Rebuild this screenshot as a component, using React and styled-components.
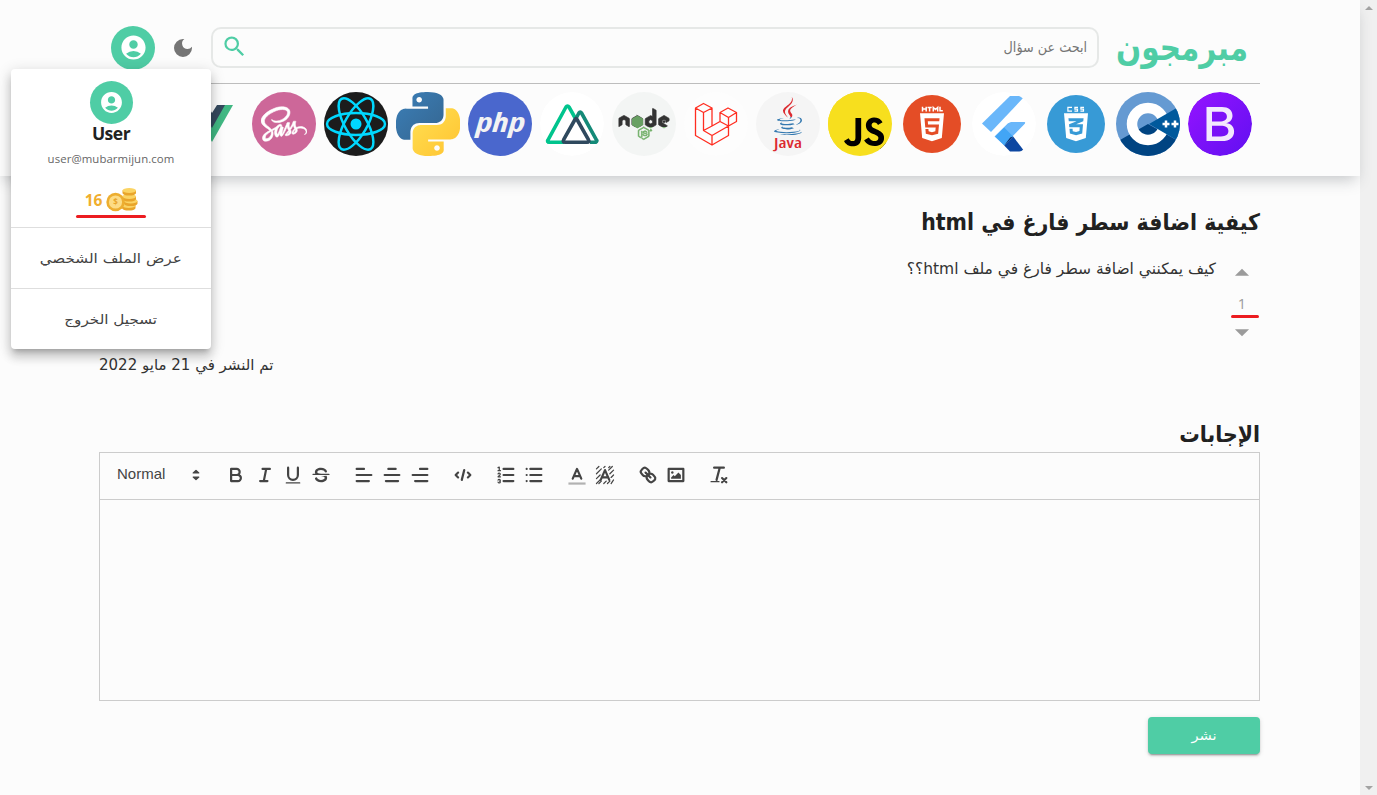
import React from "react";
import styled, { createGlobalStyle } from "styled-components";
import { MdAccountCircle, MdDarkMode, MdSearch, MdArrowDropUp, MdArrowDropDown } from "react-icons/md";
import { FaSass, FaNode, FaJava, FaHtml5, FaCss3Alt } from "react-icons/fa";
import { SiJavascript } from "react-icons/si";

const GREEN = "#4fcda5";

const Global = createGlobalStyle`
  * { box-sizing: border-box; }
  body { margin: 0; background: #fcfcfc; color: #212121; font-family: "DejaVu Sans Condensed", "DejaVu Sans", sans-serif; font-stretch: condensed; overflow: hidden; }
  button { font: inherit; border: 0; background: none; padding: 0; color: inherit; }
  svg { display: block; flex: none; }
`;

const Screen = styled.div`
  display: flex;
  width: 1377px;
  height: 795px;
`;
const Page = styled.div`
  position: relative;
  width: 1360px;
  height: 795px;
  direction: rtl;
`;
const Scrollbar = styled.aside`
  width: 17px;
  background: #f0f0f0;
  display: flex;
  flex-direction: column;
  justify-content: space-between;
  align-items: center;
  padding: 6px 0 5px;
`;
const Arrow = styled.i`
  border: 4px solid transparent;
  border-top-width: ${(p) => (p.$down ? 4 : 0)}px;
  border-bottom-width: ${(p) => (p.$down ? 0 : 4)}px;
  border-${(p) => (p.$down ? "top" : "bottom")}-color: #a3a3a3;
`;

const Header = styled.header`
  height: 176px;
  padding: 0 100px 0 99px;
  box-shadow: 0 8px 14px -4px rgba(50, 60, 65, 0.27);
`;
const TopBar = styled.div`
  height: 84px;
  border-bottom: 1px solid #bdbdbd;
  display: flex;
  align-items: center;
  padding: 12px 12px 0;
`;
const Brand = styled.h1`
  margin: 0;
  width: 132px;
  height: 40px;
  line-height: 40px;
  font-size: 36px;
  color: ${GREEN};
  white-space: nowrap;
  transform: scaleX(0.912);
  transform-origin: right;
`;
const Search = styled.div`
  width: 888px;
  height: 41px;
  margin-right: 17px;
  border: 2px solid #e6e8e7;
  border-radius: 10px;
  display: flex;
  align-items: center;
  justify-content: space-between;
  padding: 0 10px 2px 8px;
  color: #757575;
  font-size: 14.2px;
`;
const IconButton = styled.button`
  width: 24px;
  height: 24px;
  margin: 0 16px;
  padding-bottom: 2px;
  color: #757575;
`;
const Avatar = styled.span`
  width: ${(p) => p.$size}px;
  height: ${(p) => p.$size}px;
  flex: none;
  border-radius: 50%;
  background: ${GREEN};
  color: #fff;
  display: flex;
  align-items: center;
  justify-content: center;
`;
const TagList = styled.nav`
  display: flex;
  gap: 8px;
  padding: 8px 8px 0;
  overflow: hidden;
`;

const Menu = styled.div`
  position: absolute;
  left: 11px;
  top: 69px;
  width: 200px;
  height: 280px;
  background: #fff;
  border-radius: 4px;
  box-shadow: 0 5px 5px -3px rgba(0, 0, 0, 0.2), 0 8px 10px 1px rgba(0, 0, 0, 0.14), 0 3px 14px 2px rgba(0, 0, 0, 0.12);
`;
const Profile = styled.div`
  height: 158px;
  padding-top: 12px;
  display: flex;
  flex-direction: column;
  align-items: center;
`;
const UserName = styled.strong`
  font: 700 17.500px/20px "Open Sans", sans-serif;
  letter-spacing: -0.5px;
  margin-top: -1px;
`;
const Email = styled.span`
  font: 11.400px/16px "Open Sans", sans-serif;
  letter-spacing: 0.08px;
  color: #666;
  margin-top: 8px;
`;
const Points = styled.div`
  direction: ltr;
  display: flex;
  align-items: center;
  gap: 4px;
  height: 26px;
  margin-top: 20px;
  margin-bottom: 2px;
  padding-left: 1px;
  font: 700 15.500px "Open Sans", sans-serif;
  color: #f0ae2e;
`;
const RedLine = styled.span`
  width: ${(p) => p.$w}px;
  height: 3px;
  flex: none;
  border-radius: 2px;
  background: #ec1c20;
`;
const MenuItem = styled.button`
  display: block;
  width: 100%;
  height: 61px;
  border-top: 1px solid #dedede;
  font-family: "DejaVu Sans", sans-serif;
  font-stretch: normal;
  font-size: 13px;
  color: #424242;
`;
const Wide = styled.span`
  display: inline-block;
  transform: scaleX(${(p) => p.$x});
`;

const Main = styled.main`
  padding: 28px 100px 0 99px;
`;
const Heading = styled.h2`
  margin: ${(p) => p.$top || 0}px 0 0;
  height: 36px;
  line-height: 36px;
  font-size: 22.800px;
  white-space: nowrap;
`;
const Question = styled.section`
  display: flex;
  height: 100px;
  margin-top: 16px;
`;
const Votes = styled.div`
  width: 36px;
  display: flex;
  flex-direction: column;
  align-items: center;
  color: #9b9b9b;
  font: 400 14.500px/20px "Open Sans", sans-serif;
`;
const VoteValue = styled.span`
  margin-top: 4px;
  height: 21px;
`;
const VoteLine = styled(RedLine)`
  align-self: flex-start;
  margin: 0 1px -3px 0;
`;
const Body = styled.p`
  margin: 0 8px 0 0;
  font-family: "DejaVu Sans", sans-serif;
  font-stretch: normal;
  font-size: 15.500px;
  line-height: 26px;
  color: #333;
`;
const PostedAt = styled.p`
  margin: -6px 0 0;
  height: 30px;
  line-height: 30px;
  font-family: "DejaVu Sans", sans-serif;
  font-stretch: normal;
  font-size: 15px;
  color: #333;
  text-align: left;
`;
const Editor = styled.section`
  direction: ltr;
  border: 1px solid #ccc;
  height: 249px;
`;
const Toolbar = styled.div`
  height: 47px;
  border-bottom: 1px solid #ccc;
  display: flex;
  align-items: center;
  padding: 0 17px 2px;
`;
const Picker = styled.span`
  display: flex;
  justify-content: space-between;
  align-items: center;
  width: 90px;
  margin-right: -2.500px;
  color: #444;
  font: 15px/20px "Liberation Sans", Arial, sans-serif;
`;
const PickerLabel = styled.span`
  padding-bottom: 2px;
`;
const Group = styled.span`
  display: flex;
  gap: 6.200px;
  margin-left: 20.900px;
`;
const Tool = styled.svg.attrs({ viewBox: "0 0 18 18", width: 22, height: 22 })`
  fill: none;
  stroke: #444;
  stroke-width: 1.800;
  stroke-linecap: round;
  stroke-linejoin: round;
  .f { fill: #444; stroke: none; }
  .sf { fill: #444; stroke-width: 1; }
  .t { stroke-width: 1; }
`;
const Submit = styled.button`
  display: block;
  width: 112px;
  height: 37px;
  margin-top: 16px;
  border-radius: 4px;
  background: ${GREEN};
  color: #fff;
  font-size: 13px;
  box-shadow: 0 3px 1px -2px rgba(0, 0, 0, 0.2), 0 2px 2px rgba(0, 0, 0, 0.14), 0 1px 5px rgba(0, 0, 0, 0.12);
`;

const Logo = styled.svg.attrs({ viewBox: "0 0 64 64", width: 64, height: 64, direction: "ltr" })`
  border-radius: 50%;
`;
const SquareLogo = styled(Logo)`
  border-radius: 0;
`;

const Bootstrap = () => (
  <Logo>
    <defs>
      <linearGradient id="bs" x1="0" y1="0" x2="1" y2="1"><stop offset=".1" stopColor="#9013fe" /><stop offset=".9" stopColor="#6610f2" /></linearGradient>
    </defs>
    <circle cx="32" cy="32" r="32" fill="url(#bs)" />
    <path fill="#f3e9fd" fillRule="evenodd" d="M18.500 15H34c6.400 0 10.500 3.300 10.500 8.700 0 3.600-2.400 6.600-6 7.300v.2c4.600.5 7.600 3.600 7.600 8.200 0 6-4.500 9.600-12.100 9.600H18.500zm5.500 4.700v9.800h7.300c5 0 7.600-1.800 7.600-5 0-3.100-2.200-4.800-6-4.800zm0 14v10.700h9c4.900 0 7.400-1.900 7.400-5.300 0-3.600-2.700-5.400-7.900-5.400z" />
  </Logo>
);
const Cpp = () => (
  <Logo>
    <rect width="64" height="64" fill="#659ad2" />
    <path d="M4 48 32 32 64 50V64H0V50z" fill="#004482" />
    <circle cx="32" cy="32" r="16" fill="none" stroke="#fff" strokeWidth="10.500" />
    <path d="M33 32 64 14v36z" fill="#00599c" />
    <path d="M46.500 32h7M50 28.500v7M55.500 32h7M59 28.500v7" stroke="#fff" strokeWidth="2.500" />
  </Logo>
);
const Css = () => (
  <Logo>
    <circle cx="32" cy="32" r="29" fill="#379ad6" />
    <path d="M26.700 15.400h-4.100v3.700h4.100M32.700 15.400h-3.100v1.800h2.600v1.900h-3.100M38.700 15.400h-3.100v1.800h2.600v1.900h-3.100" transform="translate(1.300 0)" fill="none" stroke="#fff" strokeWidth="1.200" />
    <FaCss3Alt x="16" y="19.300" size={32} color="#fff" />
  </Logo>
);
const Flutter = () => (
  <Logo>
    <circle cx="32" cy="32" r="32" fill="#fff" />
    <path d="M38 4h12.500c1 0 1.500 1 .8 1.800L19 40l-9-8.500z" fill="#6ab7fa" />
    <path d="M39 30h13c1.300 0 1.500 1 .8 1.700L32 53l-9.500-8.500L36 31.200z" fill="#6ab7fa" />
    <path d="m32.200 35.500 9 9-9 9-9-9z" fill="#42a5f5" />
    <path d="m41.200 44.500 10 13.300c.5.700 0 1.700-1 1.700H38L32.200 53.500z" fill="#0d47a1" />
    <path d="m32.200 53.500 9-9-3 1z" fill="#082c65" />
  </Logo>
);
const Html = () => (
  <Logo>
    <circle cx="32" cy="32" r="29" fill="#e44d26" />
    <path d="M22.500 14.700v4.800m3.700-4.800v4.800m-3.700-2.400h3.700M27.500 15.500h4.200m-2.100 0v4M33.300 19.500v-4l2.200 2 2.200-2v4M40 14.700v4.100h2.800" fill="none" stroke="#fff" strokeWidth="1.500" />
    <FaHtml5 x="16" y="19.300" size={32} color="#fff" />
  </Logo>
);
const Js = () => (
  <Logo>
    <rect width="64" height="64" fill="#f7df1e" />
    <rect x="12" y="23" width="46" height="34" />
    <SiJavascript x="0" y="-2" size={61} color="#f7df1e" />
  </Logo>
);
const Java = () => (
  <Logo>
    <defs>
      <linearGradient id="jv" x1="0" y1="0" x2="0" y2="1"><stop offset=".53" stopColor="#dc2a30" /><stop offset=".53" stopColor="#3479b0" /></linearGradient>
    </defs>
    <rect width="64" height="64" fill="#f5f5f5" />
    <FaJava x="13" y="5" size={38} fill="url(#jv)" />
    <text x="18" y="56" fontFamily="Open Sans" fontWeight="600" fontSize="15" fill="#dc2a30" textLength="28" lengthAdjust="spacingAndGlyphs">Java</text>
  </Logo>
);
const Laravel = () => (
  <Logo>
    <circle cx="32" cy="32" r="32" fill="#fdfdfd" />
    <path
      fill="none" stroke="#ff2d20" strokeWidth="1.300" strokeLinejoin="round"
      d="M11.500 16 19.500 11.500 28 16 19.500 20.500zM11.500 16V43.500L28 53 44.500 43.500V34L28 43.500 19.500 38.500V20.500M28 16V34L19.500 38.500M28 43.500V53M28 34 36 29.500 44.500 34M36 20.500 44 16 52.500 20.500 44.500 25.500zM36 20.500V29.500M52.500 20.500V29.500L44.500 34V25.500"
    />
  </Logo>
);
const Node = () => (
  <Logo>
    <defs>
      <linearGradient id="nd" x1="0" y1="0" x2="0" y2="1"><stop offset=".59" stopColor="#333" /><stop offset=".59" stopColor="#6fae66" /></linearGradient>
    </defs>
    <rect width="64" height="64" fill="#f3f5f4" />
    <FaNode x="6.500" y="6.500" size={51} fill="url(#nd)" stroke="url(#nd)" strokeWidth="8" />
    <path d="m25.500 23.500 5.500 3.200v6.400l-5.500 3.200-5.500-3.200v-6.400z" fill="#68a063" />
  </Logo>
);
const Nuxt = () => (
  <Logo>
    <circle cx="32" cy="32" r="32" fill="#fff" />
    <g fill="none" strokeWidth="3.600" strokeLinejoin="round">
      <path d="M24 50.300H9c-1.500 0-1.800-1-1.200-2L26 15c.8-1.300 2.200-1.300 3 0L36 27.500" stroke="#00c48d" />
      <path d="M50 50.300h5.500c1.500 0 1.800-1 1.200-2L41.500 21c-.8-1.300-1.800-1.300-2.600 0L36 26.500" stroke="#148a78" />
      <path d="M35 27.500 23.800 47.300c-1 1.800-.5 3 1.200 3h22c1.800 0 2.300-1.200 1.300-3L37 27.500c-.7-1.200-1.400-1.200-2 0z" stroke="#2f495e" />
    </g>
  </Logo>
);
const Php = () => (
  <Logo>
    <rect width="64" height="64" fill="#4a67cd" />
    <text x="8" y="40" fontFamily="Open Sans" fontWeight="700" fontStyle="italic" fontSize="26" fill="#f3f3f3" textLength="49" lengthAdjust="spacingAndGlyphs">php</text>
  </Logo>
);
const Python = () => (
  <SquareLogo>
    <defs>
      <linearGradient id="pa" x1="0" y1="0" x2="1" y2="1"><stop stopColor="#3b7fb8" /><stop offset="1" stopColor="#35658f" /></linearGradient>
      <linearGradient id="pb" x1="0" y1="0" x2="1" y2="1"><stop stopColor="#ffe052" /><stop offset="1" stopColor="#ffc331" /></linearGradient>
    </defs>
    <g transform="scale(2.667)">
      <path fill="url(#pa)" d="M14.250.18l.9.2.73.26.59.3.45.32.34.34.25.34.16.33.1.3.04.26.02.2-.01.13V8.500l-.05.63-.13.55-.21.46-.26.38-.3.31-.33.25-.35.19-.35.14-.33.1-.3.07-.26.04-.21.02H8.770l-.69.05-.59.14-.5.22-.41.27-.33.32-.27.35-.2.36-.15.37-.1.35-.07.32-.04.27-.02.21v3.060H3.170l-.21-.03-.28-.07-.32-.12-.35-.18-.36-.26-.36-.36-.35-.46-.32-.59-.28-.73-.21-.88-.14-1.050-.05-1.230.06-1.220.16-1.040.24-.87.32-.71.36-.57.4-.44.42-.33.42-.24.4-.16.36-.1.32-.05.24-.01h.16l.06.01h8.160v-.83H6.180l-.01-2.750-.02-.37.05-.34.11-.31.17-.28.25-.26.31-.23.38-.2.44-.18.51-.15.58-.12.64-.1.71-.06.77-.04.84-.02 1.270.05zm-6.300 1.980l-.23.33-.08.41.08.41.23.34.33.22.41.09.41-.09.33-.22.23-.34.08-.41-.08-.41-.23-.33-.33-.22-.41-.09-.41.09z" />
      <path fill="url(#pb)" d="M21.100 6.110l.28.06.32.12.35.18.36.27.36.35.35.47.32.59.28.73.21.88.14 1.040.05 1.230-.06 1.230-.16 1.040-.24.86-.32.71-.36.57-.4.45-.42.33-.42.24-.4.16-.36.09-.32.05-.24.02-.16-.01h-8.220v.82h5.840l.01 2.760.02.36-.05.34-.11.31-.17.29-.25.25-.31.24-.38.2-.44.17-.51.15-.58.13-.64.09-.71.07-.77.04-.84.01-1.270-.04-1.070-.14-.9-.2-.73-.25-.59-.3-.45-.33-.34-.34-.25-.34-.16-.33-.1-.3-.04-.25-.02-.2.01-.13v-5.340l.05-.64.13-.54.21-.46.26-.38.3-.32.33-.24.35-.2.35-.14.33-.1.3-.06.26-.04.21-.02.13-.01h5.840l.69-.05.59-.14.5-.21.41-.28.33-.32.27-.35.2-.36.15-.36.1-.35.07-.32.04-.28.02-.21V6.070h2.090l.14.01zm-6.470 14.140l-.23.33-.08.41.08.41.23.33.33.23.41.08.41-.08.33-.23.23-.33.08-.41-.08-.41-.23-.33-.33-.23-.41-.08-.41.08z" />
    </g>
  </SquareLogo>
);
const ReactLogo = () => (
  <Logo>
    <rect width="64" height="64" fill="#1c1c1c" />
    <circle cx="32" cy="32" r="5.500" fill="#00d8ff" />
    <g fill="none" stroke="#00d8ff" strokeWidth="2.500">
      <ellipse cx="32" cy="32" rx="29" ry="11" />
      <ellipse cx="32" cy="32" rx="29" ry="11" transform="rotate(60 32 32)" />
      <ellipse cx="32" cy="32" rx="29" ry="11" transform="rotate(120 32 32)" />
    </g>
  </Logo>
);
const Sass = () => (
  <Logo>
    <rect width="64" height="64" fill="#cd6799" />
    <FaSass x="9" y="9" size={46} color="#fff" stroke="#fff" strokeWidth="8" />
  </Logo>
);
const Vue = () => (
  <SquareLogo>
    <path d="M11 13h42L32 50z" fill="#41b883" />
    <path d="M19 13h26L32 36z" fill="#35495e" />
    <path d="M27 13h10l-5 8z" fill="#fcfcfc" />
  </SquareLogo>
);

const Coins = () => (
  <svg width="32" height="26" viewBox="0 0 32 26">
    {[[16, 18.500], [18, 14], [16.500, 9.500], [16.500, 3.500]].map(([x, y]) => (
      <g key={y}>
        <path d={`M${x} ${y}v2.500c0 3.400 13.500 3.400 13.500 0v-2.500z`} fill="#e9a52b" />
        <ellipse cx={x + 6.750} cy={y} rx="6.750" ry="2.400" fill="#fbd464" />
      </g>
    ))}
    <circle cx="9.500" cy="15" r="9.200" fill="#edae30" />
    <circle cx="9.500" cy="15" r="6.600" fill="#fddc85" />
    <text x="9.500" y="18" textAnchor="middle" direction="ltr" fontFamily="Open Sans" fontWeight="700" fontSize="8" fill="#e9a52b">$</text>
  </svg>
);

const tags = [Bootstrap, Cpp, Css, Flutter, Html, Js, Java, Laravel, Node, Nuxt, Php, Python, ReactLogo, Sass, Vue];

const UpDown = () => (
  <Tool><path className="sf" d="M6.700 10.700 9 12.800 11.300 10.700zM6.700 7.300 9 5.200 11.300 7.300z" /></Tool>
);

export default function App() {
  return (
    <Screen>
      <Global />
      <Page>
        <Header>
          <TopBar>
            <Brand>مبرمجون</Brand>
            <Search>
              <span>ابحث عن سؤال</span>
              <MdSearch size={27} color={GREEN} />
            </Search>
            <IconButton><MdDarkMode size={24} /></IconButton>
            <Avatar $size={44}><MdAccountCircle size={29} /></Avatar>
          </TopBar>
          <TagList>{tags.map((Tag, i) => <Tag key={i} />)}</TagList>
        </Header>

        <Main>
          <Heading>كيفية اضافة سطر فارغ في html</Heading>
          <Question>
            <Votes>
              <MdArrowDropUp size={34} />
              <VoteValue>1</VoteValue>
              <VoteLine $w={28} />
              <MdArrowDropDown size={34} />
            </Votes>
            <Body>كيف يمكنني اضافة سطر فارغ في ملف html؟؟</Body>
          </Question>
          <PostedAt>تم النشر في 21 مايو 2022</PostedAt>
          <Heading $top={36}>الإجابات</Heading>
          <Editor>
            <Toolbar>
              <Picker><PickerLabel>Normal</PickerLabel><UpDown /></Picker>
              <Group>
                <Tool><path d="M5 4H9.500A2.500 2.500 0 0 1 12 6.500 2.500 2.500 0 0 1 9.500 9H5ZM5 9h5.500A2.500 2.500 0 0 1 13 11.500 2.500 2.500 0 0 1 10.500 14H5Z" /></Tool>
                <Tool><path d="M7 4h6M5 14h6M8 14 10 4" /></Tool>
                <Tool><path d="M5 3V9a4 4 0 0 0 4 4H9a4 4 0 0 0 4-4V3" /><rect className="f" x="3" y="15" width="12" height="1" rx=".5" /></Tool>
                <Tool>
                  <path className="t" d="M15.500 8.500h-13" />
                  <path className="f" d="M9.007 8C6.542 7.791 6 7.519 6 6.500 6 5.792 7.283 5 9 5c1.571 0 2.765.679 2.969 1.309a1 1 0 0 0 1.900-.617C13.356 4.106 11.354 3 9 3 6.200 3 4 4.538 4 6.500a3.200 3.200 0 0 0 .5 1.843ZM8.984 10C11.457 10.208 12 10.479 12 11.500c0 .708-1.283 1.500-3 1.500-1.571 0-2.765-.679-2.969-1.309a1 1 0 1 0-1.900.617C4.644 13.894 6.646 15 9 15c2.800 0 5-1.538 5-3.500a3.200 3.200 0 0 0-.5-1.843Z" />
                </Tool>
              </Group>
              <Group>
                <Tool><path d="M3 9H15M3 14H13M3 4H9" /></Tool>
                <Tool><path d="M15 9H3M14 14H4M12 4H6" /></Tool>
                <Tool><path d="M15 9H3M15 14H5M15 4H9" /></Tool>
              </Group>
              <Group>
                <Tool><path d="M5 7 3 9 5 11M13 7 15 9 13 11M10 5 8 13" /></Tool>
              </Group>
              <Group>
                <Tool>
                  <path d="M7 4h8M7 9h8M7 14h8" />
                  <path className="t" d="M2.500 5.500h2M3.500 5.500V2.500L2.500 3M4.500 10.500h-2c0-.234 1.850-1.076 1.850-2.234A.96.96 0 0 0 2.500 8.156M2.500 14.846a.96.96 0 0 0 1.850-.109A.7.7 0 0 0 3.750 14a.69.69 0 0 0 .6-.736.96.96 0 0 0-1.850-.109" />
                </Tool>
                <Tool><path d="M6 4h9M6 9h9M6 14h9M3 4h0M3 9h0M3 14h0" /></Tool>
              </Group>
              <Group>
                <Tool><path d="M2 16h14" opacity=".4" strokeLinecap="butt" /><path d="M5.500 12 9 4 12.500 12M11.630 10H6.380" /></Tool>
                <Tool>
                  <path className="t" d="M2 4 4 2M2 8 6 4M2 12 5 9M2 16 5 13M8 3 9 2M12 3 13 2M4 16 6 14M13 8 16 5M14 11 16 9M12 5 15 2M8 16 10 14M11 16 13 14M14 16 16 13" />
                  <path d="M5.500 13 9 5 12.500 13M11.630 11H6.380" />
                </Tool>
              </Group>
              <Group>
                <Tool>
                  <path d="M7 7 11 11" />
                  <path d="M8.900 4.577a3.476 3.476 0 0 1 .36 4.679A3.476 3.476 0 0 1 4.577 8.900C3.185 7.500 2.035 6.400 4.217 4.217S7.500 3.185 8.900 4.577ZM13.423 9.100a3.476 3.476 0 0 0-4.679-.36 3.476 3.476 0 0 0 .36 4.679c1.392 1.392 2.500 2.542 4.679.36s1.032-3.287-.36-4.679Z" />
                </Tool>
                <Tool>
                  <rect x="3" y="4" width="12" height="10" />
                  <circle className="f" cx="6" cy="7" r="1" />
                  <path className="f" d="M5 12V11L7 9 8 10 11 7 13 9V12Z" />
                </Tool>
              </Group>
              <Group>
                <Tool>
                  <path d="M5 3H13M9.600 3 7 13" />
                  <path className="t" d="M2.500 14.500H9" />
                  <path d="M11.500 11.500 15 15M15 11.500 11.500 15" />
                </Tool>
              </Group>
            </Toolbar>
          </Editor>
          <Submit><Wide $x={1.250}>نشر</Wide></Submit>
        </Main>

        <Menu>
          <Profile>
            <Avatar $size={43}><MdAccountCircle size={25} /></Avatar>
            <UserName>User</UserName>
            <Email>user@mubarmijun.com</Email>
            <Points>16<Coins /></Points>
            <RedLine $w={70} />
          </Profile>
          <MenuItem><Wide $x={1.170}>عرض الملف الشخصي</Wide></MenuItem>
          <MenuItem><Wide $x={1.170}>تسجيل الخروج</Wide></MenuItem>
        </Menu>
      </Page>
      <Scrollbar>
        <Arrow />
        <Arrow $down />
      </Scrollbar>
    </Screen>
  );
}
